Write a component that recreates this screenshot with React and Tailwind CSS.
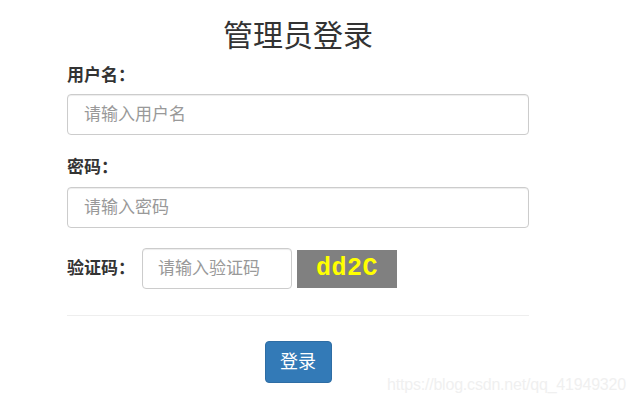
import React, { useState } from 'react';

const cjk = { fontFamily: '"Liberation Sans", "Noto Sans CJK SC", sans-serif' };

export default function App() {
  const [username, setUsername] = useState('');
  const [password, setPassword] = useState('');
  const [code, setCode] = useState('');

  return (
    <div className="relative w-[639px] h-[405px] bg-white overflow-hidden text-[#333]" style={cjk}>
      <div className="ml-[67px] w-[462px] flex flex-col">
        <h1 className="mt-[18px] text-center text-[30px] leading-[36px] font-normal">管理员登录</h1>

        {/* 用户名 */}
        <label className="mt-[12px] text-[17px] leading-[20px] font-bold">用户名：</label>
        <input
          value={username}
          onChange={(e) => setUsername(e.target.value)}
          placeholder="请输入用户名"
          className="mt-[8px] h-[41px] px-[16px] text-[17px] border border-[#ccc] rounded-[4px] shadow-[inset_0_1px_1px_rgba(0,0,0,0.075)] placeholder:text-[#999] outline-none"
        />

        {/* 密码 */}
        <label className="mt-[23px] text-[17px] leading-[20px] font-bold">密码：</label>
        <input
          type="password"
          value={password}
          onChange={(e) => setPassword(e.target.value)}
          placeholder="请输入密码"
          className="mt-[9px] h-[41px] px-[16px] text-[17px] border border-[#ccc] rounded-[4px] shadow-[inset_0_1px_1px_rgba(0,0,0,0.075)] placeholder:text-[#999] outline-none"
        />

        {/* 验证码 */}
        <div className="mt-[20px] flex items-center">
          <label className="w-[75px] text-[17px] leading-[20px] font-bold">验证码：</label>
          <input
            value={code}
            onChange={(e) => setCode(e.target.value)}
            placeholder="请输入验证码"
            className="w-[150px] h-[41px] px-[15px] text-[17px] border border-[#ccc] rounded-[4px] shadow-[inset_0_1px_1px_rgba(0,0,0,0.075)] placeholder:text-[#999] outline-none"
          />
          <div
            className="ml-[5px] w-[100px] h-[38px] bg-[#808080] flex items-center justify-center text-[#ffff00] text-[25px] font-bold tracking-[0.5px]"
            style={{ fontFamily: '"Liberation Mono", "DejaVu Sans Mono", monospace' }}
          >
            dd2C
          </div>
        </div>

        <hr className="mt-[26px] border-0 border-t border-[#eee]" />

        <div className="mt-[25px] flex justify-center">
          <button className="w-[67px] h-[42px] bg-[#337ab7] border border-[#2e6da4] rounded-[4px] text-white text-[18px]">
            登录
          </button>
        </div>
      </div>

      {/* watermark */}
      <div className="absolute left-[387px] top-[375px] text-[16px] leading-[20px] text-[#f0f0f0] tracking-[-0.2px]" style={{ fontFamily: '"Liberation Sans", Arial, sans-serif' }}>
        https://blog.csdn.net/qq_41949320
      </div>
    </div>
  );
}
